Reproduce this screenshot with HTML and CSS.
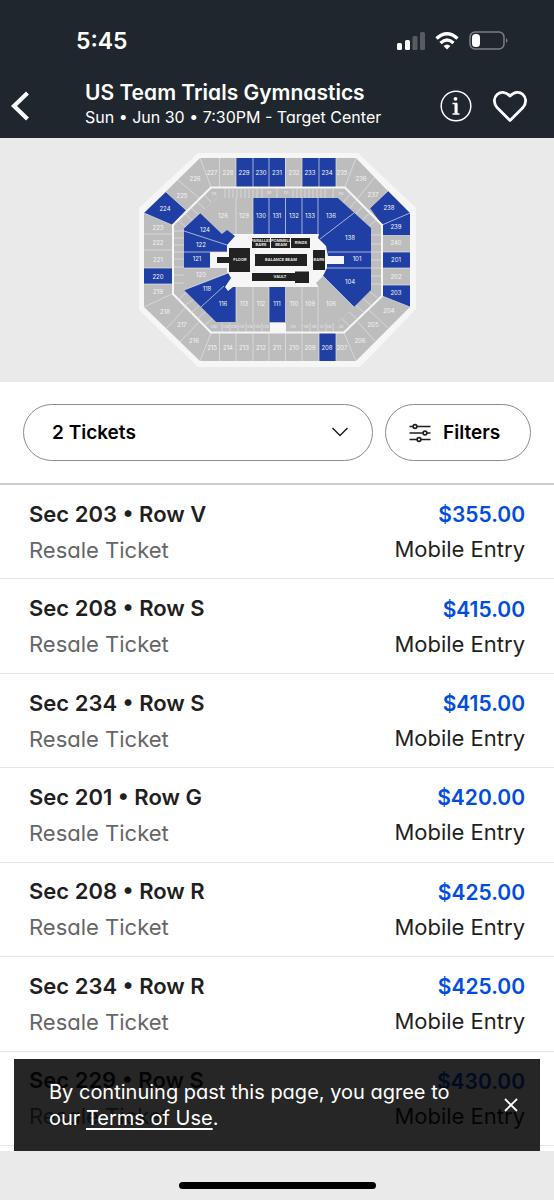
FILE: index.html
```html
<!DOCTYPE html>
<html lang="en">

<head>
    <meta charset="UTF-8">
    <meta name="viewport" content="width=device-width, initial-scale=1">
    <title>US Team Trials Gymnastics</title>
    <link rel="stylesheet" href="styles.css">
</head>

<body>
    <header class="top">
        <div class="status">
            <span class="time">5:45</span>
            <svg class="status-icons" width="112" height="20" viewBox="0 0 112 20">
                <g fill="#fff">
                    <rect x="0" y="12" width="5" height="7" rx="1.5" />
                    <rect x="8" y="9" width="5" height="10" rx="1.5" />
                    <rect x="15.500" y="5" width="5" height="14" rx="1.5" opacity=".25" />
                    <rect x="23" y="1" width="5" height="18" rx="1.5" opacity=".25" />
                </g>
                <g fill="none" stroke="#fff" stroke-width="3.400">
                    <path d="M39.500 7.500Q50 -2 60.500 7.500" />
                    <path d="M43.500 12Q50 6 56.500 12" />
                </g>
                <path d="M46.500 15Q50 12 53.500 15L50 18.500z" fill="#fff" />
                <rect x="73" y="1" width="34" height="17" rx="5" fill="none" stroke="#7b8085" stroke-width="1.500" />
                <rect x="75" y="3" width="8" height="13" rx="3.500" fill="#fff" />
                <path d="M109 7q3 2.500 0 5z" fill="#7b8085" />
            </svg>
        </div>
        <div class="event">
            <button class="icon-btn back" aria-label="Back">
                <svg width="20" height="30" viewBox="0 0 20 30">
                    <path d="M17.500 2L4 15L17.500 28" fill="none" stroke="#fff" stroke-width="4.200" />
                </svg>
            </button>
            <div class="event-text">
                <h1>US Team Trials Gymnastics</h1>
                <p>Sun • Jun 30 • 7:30PM - Target Center</p>
            </div>
            <button class="icon-btn" aria-label="Event info">
                <svg width="32" height="32" viewBox="0 0 32 32">
                    <circle cx="16" cy="16" r="14.800" fill="none" stroke="#fff" stroke-width="1.500" />
                    <circle cx="15.500" cy="8.800" r="1.900" fill="#fff" />
                    <path d="M12.500 13.500H16.500V23.500M12.500 24H19.500" fill="none" stroke="#fff" stroke-width="1.500" />
                    <path d="M14.500 13.500h3v10h-3z" fill="#fff" />
                </svg>
            </button>
            <button class="icon-btn" aria-label="Save event">
                <svg width="36" height="34" viewBox="0 0 36 34">
                    <path d="M18 31.500L5 18.500C-3 8.500 9 -2.500 18 7C27 -2.500 39 8.500 31 18.500z" fill="none" stroke="#fff" stroke-width="2.800" stroke-linejoin="round" />
                </svg>
            </button>
        </div>
    </header>

    <section class="map">
        <svg class="arena" viewBox="139 153 277 214" role="img" aria-label="Seating map">
            <path class="shell" d="M198 153H358L416 208V309L360 367H198L139 310V208z" />
            <!-- upper level -->
            <path class="seat" d="M200 158H356L410 214V307L356 361H200L144 307V213z" />
            <g class="open">
                <path d="M236 158H285V187H236zM302 158H336V187H302z" />
                <path d="M166 192L186 210L172 225L144 213z" />
                <path d="M388 191L410 213V235.500H382V225L370 208z" />
                <path d="M382 252H410V268H382zM382 285H410V307L382 296z" />
                <path d="M144 268H172V284H144zM319 333H336V361H319z" />
            </g>
            <g class="lines">
                <path d="M200 158L211 187M219.500 158V187M236 158V187M253 158V187M269 158V187M285.500 158V187M302 158V187M319 158V187M336 158V187M356 158L345 187" />
                <path d="M375 177L358 198M388 191L370 208M410 213L382 225M382 235.500H410M382 252H410M382 268H410M382 285H410M410 307L382 296M388 328L369 310M375 341L358 322" />
                <path d="M200 361L211 333M219.500 333V361M236 333V361M253 333V361M269 333V361M285.500 333V361M302 333V361M319 333V361M336 333V361M356 361L344 333" />
                <path d="M178 180L199 198M166 192L186 210M144 213L172 225M144 234H172M144 250H172M144 268H172M144 284H172M144 307L172 294M167 328L185 308M180 342L199 322" />
            </g>
            <!-- suites -->
            <path class="suites" d="M211 187.500H345L382 225V296L344 332.500H211L173 294V225z" />
            <path class="lines" d="M225 189V198M229 189V198M233 189V198M237 189V198M241 189V198M245 189V198M249 189V198M253 189V198M257 189V198M262 189V198M277 189V198M293 189V198M297 189V198M301 189V198M305 189V198M309 189V198M313 189V198M317 189V198M321 189V198M325 189V198M333 189V198
                M174 231H184M174 238H184M174 245H184M174 252H184M174 259H184M174 267H184M174 275H184M174 283H184M371 235H381M371 244H381M371 252H381M371 260H381M371 268H381M371 276H381M371 284H381
                M222 323V332M230 323V332M238 323V332M246 323V332M254 323V332M262 323V332M302 323V332M310 323V332M318 323V332M326 323V332M333 323V332
                M178 220L187 228M184 213L193 221M190 207L199 215M196 201L205 209M203 194L211 202M351 193L343 203M357 200L349 209M363 206L355 215M370 213L361 221M376 220L367 228M379 299L369 291M372 306L362 298M365 313L355 305M358 320L348 311M351 327L341 318M178 300L187 292M184 306L194 299M191 313L200 305M197 319L206 311M204 326L213 318" />
            <path class="shell" d="M270 323H286V332H270z" />
            <g class="tiny">
                <text x="214" y="195">125</text><text x="269" y="194">130</text><text x="286" y="194">131</text><text x="341" y="195">135</text>
                <text x="214" y="328">C20</text><text x="226" y="328">C19</text><text x="234" y="328">C18</text><text x="242" y="328">C17</text><text x="250" y="328">C16</text><text x="258" y="328">C15</text><text x="266" y="328">C14</text><text x="293" y="328">C10</text><text x="306" y="328">C9</text><text x="314" y="328">C8</text><text x="322" y="328">C7</text><text x="329" y="328">C6</text><text x="341" y="328">C5</text>
            </g>
            <!-- lower level -->
            <path class="floor" d="M217 198H338L371 228V290L338 322H216L184 290V228z" />
            <path class="seat" d="M217 198H253V234H222L200 213zM184 268H227V273L184 290zM236 287H318V322H236zM316 283L323 276L354 307L338 322H318V286z" />
            <g class="open">
                <path d="M253 198H338L371 228V290L354 307L323 276L327 268V264H344V256H328L326 246L318 238L319 234H253z" />
                <path d="M200 213L222 234L227 230L235 236L227 245V252H210V268H184V228z" />
                <path d="M184 290L228 273L231 278L225 287L228 291L233 287H236V322H216z" />
                <path d="M269 287H285.500V322H269z" />
            </g>
            <path class="lines" d="M236 198V234M253 198V234M269 198V234M285.500 198V234M302 198V234M318 198V234M354 213L320 239M328 252H371M327 268H371M323 276L354 307M302 287V322M318 287V322M285.500 287V322M269 287V322M253 287V322M236 287V322M201 307L224 286M184 290L228 273M184 268H210M184 252H227M184 231L227 245M184 228L200 213" />
            <g class="stage">
                <path d="M229 248H250V272H229V263H217V257H229z" />
                <path d="M252 238H270V248H252zM271 238H290V248H271zM291 238H310V248H291z" />
                <path d="M255 254H307V266H255zM313 250H325V270H313z" />
                <path d="M252 273H295V271.500H309V283H295V281H252z" />
            </g>
            <g class="names">
                <text x="240" y="261">FLOOR</text><text x="261" y="242">PARALLEL</text><text x="261" y="246">BARS</text><text x="281" y="242">POMMELL</text><text x="281" y="246">BEAM</text><text x="301" y="244">RINGS</text><text x="281" y="261">BALANCE BEAM</text><text x="319" y="261">BARS</text><text x="280" y="278">VAULT</text>
            </g>
            <g class="numbers">
                <text x="195" y="181">226</text><text x="212" y="175">227</text><text x="228" y="175">228</text><text x="244" y="175">229</text><text x="261" y="175">230</text><text x="277" y="175">231</text><text x="294" y="175">232</text><text x="310" y="175">233</text><text x="327" y="175">234</text><text x="342" y="175">235</text><text x="361" y="181">236</text>
                <text x="373" y="197">237</text><text x="389" y="210">238</text><text x="396" y="229">239</text><text x="396" y="245">240</text><text x="396" y="262">201</text><text x="396" y="279">202</text><text x="396" y="295">203</text><text x="389" y="313">204</text><text x="373" y="327">205</text><text x="360" y="343">206</text>
                <text x="342" y="350">207</text><text x="327" y="350">208</text><text x="310" y="350">209</text><text x="294" y="350">210</text><text x="277" y="350">211</text><text x="261" y="350">212</text><text x="244" y="350">213</text><text x="228" y="350">214</text><text x="212" y="350">215</text><text x="194" y="343">216</text>
                <text x="182" y="327">217</text><text x="165" y="314">218</text><text x="158" y="294">219</text><text x="158" y="279">220</text><text x="158" y="262">221</text><text x="158" y="245">222</text><text x="158" y="230">223</text><text x="165" y="211">224</text><text x="182" y="198">225</text>
                <text x="223" y="218">126</text><text x="244" y="218">129</text><text x="261" y="218">130</text><text x="277" y="218">131</text><text x="294" y="218">132</text><text x="310" y="218">133</text><text x="331" y="218">136</text><text x="350" y="240">138</text><text x="357" y="261">101</text><text x="350" y="284">104</text>
                <text x="331" y="306">106</text><text x="310" y="306">109</text><text x="294" y="306">110</text><text x="277" y="306">111</text><text x="261" y="306">112</text><text x="244" y="306">113</text><text x="223" y="306">116</text><text x="207" y="291">118</text><text x="201" y="277">120</text><text x="197" y="261">121</text><text x="201" y="247">122</text><text x="205" y="232">124</text>
            </g>
        </svg>
    </section>

    <section class="filters">
        <div class="quantity">
            <select aria-label="Number of tickets">
                <option>1 Ticket</option>
                <option selected>2 Tickets</option>
                <option>3 Tickets</option>
                <option>4 Tickets</option>
            </select>
            <svg class="chevron" width="18" height="12" viewBox="0 0 18 12">
                <path d="M1.500 2L9 9.500L16.500 2" fill="none" stroke="#1f1f1f" stroke-width="1.500" />
            </svg>
        </div>
        <button class="filter-btn">
            <svg width="22" height="20" viewBox="0 0 22 20" fill="#fff" stroke="#1f1f1f" stroke-width="1.600">
                <path d="M0.500 3.500H21.500M0.500 10H21.500M0.500 16.500H21.500" />
                <circle cx="6" cy="3.500" r="1.900" />
                <circle cx="16" cy="10" r="1.900" />
                <circle cx="10" cy="16.500" r="1.900" />
            </svg>
            Filters
        </button>
    </section>

    <ul class="tickets">
        <li class="ticket">
            <div class="seat-info"><h2>Sec 203 • Row V</h2><p>Resale Ticket</p></div>
            <div class="price-info"><strong>$355.00</strong><p>Mobile Entry</p></div>
        </li>
        <li class="ticket">
            <div class="seat-info"><h2>Sec 208 • Row S</h2><p>Resale Ticket</p></div>
            <div class="price-info"><strong>$415.00</strong><p>Mobile Entry</p></div>
        </li>
        <li class="ticket">
            <div class="seat-info"><h2>Sec 234 • Row S</h2><p>Resale Ticket</p></div>
            <div class="price-info"><strong>$415.00</strong><p>Mobile Entry</p></div>
        </li>
        <li class="ticket">
            <div class="seat-info"><h2>Sec 201 • Row G</h2><p>Resale Ticket</p></div>
            <div class="price-info"><strong>$420.00</strong><p>Mobile Entry</p></div>
        </li>
        <li class="ticket">
            <div class="seat-info"><h2>Sec 208 • Row R</h2><p>Resale Ticket</p></div>
            <div class="price-info"><strong>$425.00</strong><p>Mobile Entry</p></div>
        </li>
        <li class="ticket">
            <div class="seat-info"><h2>Sec 234 • Row R</h2><p>Resale Ticket</p></div>
            <div class="price-info"><strong>$425.00</strong><p>Mobile Entry</p></div>
        </li>
        <li class="ticket">
            <div class="seat-info"><h2>Sec 229 • Row S</h2><p>Resale Ticket</p></div>
            <div class="price-info"><strong>$430.00</strong><p>Mobile Entry</p></div>
        </li>
    </ul>

    <footer class="bottom">
        <!-- terms notice lies over the end of the list -->
        <div class="notice">
            <p>By continuing past this page, you agree to our <a href="#">Terms of Use</a>.</p>
            <button class="icon-btn" aria-label="Close">
                <svg width="14" height="14" viewBox="0 0 14 14">
                    <path d="M1 1L13 13M13 1L1 13" stroke="#fff" stroke-width="1.800" />
                </svg>
            </button>
        </div>
        <div class="home-bar"></div>
    </footer>
</body>

</html>
```
FILE: styles.css
```css
* {
    box-sizing: border-box;
}

body {
    margin: 0;
    min-height: 100vh;
    display: flex;
    flex-direction: column;
    background-color: white;
    color: #1f1f1f;
    font-family: Inter, "Open Sans", sans-serif;
    font-feature-settings: "cv11";
}

h1,
h2,
p,
ul {
    margin: 0;
    padding: 0;
}

button,
select {
    font: inherit;
    font-feature-settings: inherit;
    color: inherit;
}

.icon-btn {
    display: flex;
    padding: 0;
    border: 0;
    background: none;
}

/* header */

.top {
    background-color: #1f262d;
    color: white;
    padding-top: 24px;
}

.status {
    display: flex;
    justify-content: space-between;
    align-items: center;
    height: 34px;
    padding: 0 45px 0 76px;
}

.time {
    font-size: 23px;
    font-weight: 600;
}

.event {
    display: flex;
    align-items: center;
    gap: 20px;
    height: 80px;
    padding: 16px 26px 0 10px;
}

.event-text {
    flex: 1;
    padding: 0 0 4px 55px;
}

.back {
    margin-right: -20px;
}

.event h1 {
    font-size: 21px;
    font-weight: 600;
    line-height: 26px;
}

.event p {
    font-size: 16px;
    line-height: 22px;
}

/* seating map */

.map {
    display: flex;
    justify-content: center;
    padding: 15px 0;
    background-color: #eaeaea;
}

.arena {
    width: 50%;
    min-width: 277px;
}

.shell,
.floor {
    fill: #f6f6f6;
}

.seat,
.suites {
    fill: #bdbdbd;
}

.suites {
    stroke: #f6f6f6;
    stroke-width: 2;
}

.open {
    fill: #1f3fa5;
}

.lines {
    fill: none;
    stroke: #e2e2e2;
    stroke-width: 0.7;
}

.stage {
    fill: #222;
}

.numbers,
.names,
.tiny {
    fill: #f4f4f4;
    text-anchor: middle;
    font-size: 6px;
}

.names {
    font-size: 4px;
    font-weight: 600;
}

.tiny {
    font-size: 3px;
}

/* filter bar */

.filters {
    display: flex;
    gap: 12px;
    padding: 22px 23px;
    border-bottom: 2px solid #ccc;
    font-size: 19px;
    font-weight: 600;
    color: #000;
}

.quantity {
    flex: 1;
    position: relative;
}

.quantity select {
    width: 100%;
    height: 57px;
    padding: 0 28px;
    border: 1px solid #8c8c8c;
    border-radius: 29px;
    background-color: white;
    appearance: none;
}

.chevron {
    position: absolute;
    top: 22px;
    right: 24px;
    pointer-events: none;
}

.filter-btn {
    display: flex;
    align-items: center;
    gap: 12px;
    width: 146px;
    padding: 0 23px;
    border: 1px solid #8c8c8c;
    border-radius: 29px;
    background-color: white;
}

/* ticket list */

.tickets {
    flex: 1;
    display: grid;
    grid-auto-rows: 1fr;
    padding-bottom: 5px;
    list-style: none;
    font-size: 22px;
}

.ticket {
    display: flex;
    justify-content: space-between;
    align-items: center;
    padding: 0 29px;
    border-bottom: 1px solid #e6e6e6;
}

.seat-info {
    line-height: 36px;
}

.seat-info h2 {
    font-size: 22px;
    font-weight: 600;
}

.seat-info p {
    color: #666;
}

.price-info {
    line-height: 34px;
    text-align: right;
}

.price-info strong {
    font-size: 21px;
    font-weight: 600;
    color: #024ddf;
}

/* terms notice and home bar */

.bottom {
    position: relative;
    display: flex;
    justify-content: center;
    height: 49px;
    padding-top: 31px;
    background-color: #eaeaea;
}

.notice {
    position: absolute;
    left: 14px;
    right: 14px;
    bottom: 100%;
    display: flex;
    justify-content: space-between;
    align-items: center;
    gap: 40px;
    padding: 20px 22px 20px 35px;
    background-color: rgba(0, 0, 0, 0.85);
    color: white;
    font-size: 20px;
    line-height: 26px;
}

.notice a {
    color: inherit;
    text-underline-offset: 3px;
}

.home-bar {
    width: 197px;
    height: 7px;
    border-radius: 4px;
    background-color: #000;
}
```
